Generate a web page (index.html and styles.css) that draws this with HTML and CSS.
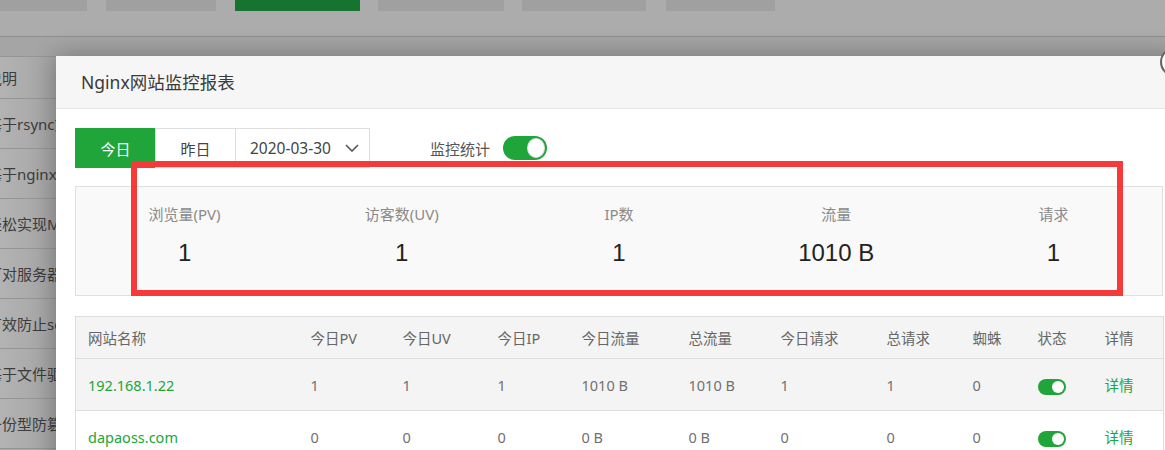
FILE: index.html
```html
<!DOCTYPE html>
<html lang="zh-CN">
<head>
<meta charset="utf-8">
<title>Nginx网站监控报表</title>
<link rel="stylesheet" href="styles.css">
</head>
<body>
<div class="page-bg">
  <div class="topbar">
    <div class="tabs">
      <span class="tab w1"></span>
      <span class="tab w2"></span>
      <span class="tab w3 green"></span>
      <span class="tab w4"></span>
      <span class="tab w5"></span>
      <span class="tab w6"></span>
    </div>
  </div>
  <div class="band"></div>
  <ul class="doc-list">
    <li class="first"><span>说明</span></li>
    <li><span>基于rsync文件同步</span></li>
    <li><span>基于nginx防火墙</span></li>
    <li><span>轻松实现MySQL</span></li>
    <li><span>可对服务器进行</span></li>
    <li><span>有效防止sql注入</span></li>
    <li><span>基于文件驱动</span></li>
    <li><span>备份型防篡改</span></li>
  </ul>
</div>

<div class="modal">
  <div class="modal-head">Nginx网站监控报表</div>
  <div class="modal-body">
    <div class="toolbar">
      <div class="btn-group">
        <span class="btn active">今日</span>
        <span class="btn">昨日</span>
        <span class="date-select">2020-03-30
          <svg class="chev" width="14" height="8" viewBox="0 0 14 8"><polyline points="1,1 7,7 13,1" fill="none" stroke="#555" stroke-width="1.6"/></svg>
        </span>
      </div>
      <div class="monitor">
        <span class="monitor-label">监控统计</span>
        <span class="switch big"><span class="knob"></span></span>
      </div>
    </div>

    <div class="stats">
      <div class="stat"><div class="stat-label">浏览量(PV)</div><div class="stat-value">1</div></div>
      <div class="stat"><div class="stat-label">访客数(UV)</div><div class="stat-value">1</div></div>
      <div class="stat"><div class="stat-label">IP数</div><div class="stat-value">1</div></div>
      <div class="stat"><div class="stat-label">流量</div><div class="stat-value">1010 B</div></div>
      <div class="stat"><div class="stat-label">请求</div><div class="stat-value">1</div></div>
    </div>

    <table class="sites">
      <colgroup>
        <col class="c1"><col class="c2"><col class="c3"><col class="c4"><col class="c5"><col class="c6"><col class="c7"><col class="c8"><col class="c9"><col class="c10"><col class="c11">
      </colgroup>
      <thead>
        <tr><th>网站名称</th><th>今日PV</th><th>今日UV</th><th>今日IP</th><th>今日流量</th><th>总流量</th><th>今日请求</th><th>总请求</th><th>蜘蛛</th><th>状态</th><th>详情</th></tr>
      </thead>
      <tbody>
        <tr class="hover">
          <td class="link">192.168.1.22</td><td>1</td><td>1</td><td>1</td><td>1010 B</td><td>1010 B</td><td>1</td><td>1</td><td>0</td>
          <td><span class="switch small"><span class="knob"></span></span></td><td class="link">详情</td>
        </tr>
        <tr>
          <td class="link">dapaoss.com</td><td>0</td><td>0</td><td>0</td><td>0 B</td><td>0 B</td><td>0</td><td>0</td><td>0</td>
          <td><span class="switch small"><span class="knob"></span></span></td><td class="link">详情</td>
        </tr>
      </tbody>
    </table>
  </div>
  <span class="close-btn"></span>
</div>

<div class="highlight"></div>
</body>
</html>
```

FILE: styles.css
```css
* { box-sizing: border-box; }
html, body {
  margin: 0;
  padding: 0;
}
body {
  width: 1165px;
  height: 450px;
  overflow: hidden;
  position: relative;
  font-family: "Noto Sans", "Noto Sans CJK SC", sans-serif;
  background: #a9a9a9;
}

/* dimmed background page */
.page-bg {
  width: 100%;
  height: 100%;
}
.topbar {
  height: 37px;
  background: #acacac;
  border-bottom: 1px solid #8f8f8f;
}
.tabs {
  display: flex;
  height: 11px;
}
.tab {
  display: block;
  height: 11px;
  background: #a0a0a0;
}
.tab.w1 { width: 87px; }
.tab.w2 { width: 110px; margin-left: 19px; }
.tab.w3 { width: 125px; margin-left: 19px; }
.tab.w4 { width: 126px; margin-left: 18px; }
.tab.w5 { width: 124px; margin-left: 18px; }
.tab.w6 { width: 109px; margin-left: 20px; }
.tab.green { background: #177430; }
.band {
  height: 19px;
  background: #a5a5a5;
}
.doc-list {
  list-style: none;
  margin: 0;
  padding: 0;
  width: 160px;
  border-top: 1px solid #959595;
}
.doc-list li {
  height: 50px;
  border-bottom: 1px solid #959595;
  overflow: hidden;
  white-space: nowrap;
  display: flex;
  align-items: center;
  background: linear-gradient(to right, #b3b3b3 0px, #a4a4a4 56px);
}
.doc-list li.first { height: 42px; }
.doc-list li span {
  margin-left: -13px;
  font-size: 15px;
  color: #3c3c3c;
}

/* modal */
.modal {
  position: absolute;
  left: 56px;
  top: 56px;
  width: 1126px;
  height: 420px;
  background: #fff;
  box-shadow: 0 0 24px rgba(0, 0, 0, 0.3);
}
.modal-head {
  height: 53px;
  line-height: 52px;
  background: #f6f6f6;
  border-bottom: 1px solid #e6e6e6;
  padding-left: 25px;
  font-size: 17.5px;
  color: #3a3a3a;
}
.modal-body {
  padding: 19px 19px 0 19px;
}
.close-btn {
  position: absolute;
  left: 1104px;
  top: -9px;
  width: 30px;
  height: 30px;
  border-radius: 50%;
  background: #fff;
  border: 2px solid #666;
}

.toolbar {
  display: flex;
  align-items: center;
  height: 40px;
}
.btn-group {
  display: flex;
  height: 40px;
}
.btn, .date-select {
  display: flex;
  align-items: center;
  height: 40px;
  border: 1px solid #dddddd;
  font-size: 15px;
  color: #444;
  background: #fff;
}
.btn {
  width: 81px;
  justify-content: center;
}
.btn + .btn, .btn + .date-select { margin-left: -1px; }
.btn.active {
  width: 81px;
  background: #20a53a;
  border-color: #20a53a;
  color: #fff;
}
.date-select {
  width: 135px;
  padding-left: 14px;
  padding-right: 10px;
  justify-content: space-between;
  font-size: 15.5px;
}
.chev { display: block; }

.monitor {
  display: flex;
  align-items: center;
  margin-left: 60px;
}
.monitor-label {
  font-size: 15px;
  color: #555;
}

.switch {
  display: inline-flex;
  align-items: center;
  justify-content: flex-end;
  background: #20a53a;
  border-radius: 999px;
}
.switch .knob {
  display: block;
  background: #fff;
  border-radius: 50%;
}
.switch.big {
  width: 44px;
  height: 24px;
  margin-left: 13px;
  padding: 2px;
}
.switch.big .knob {
  width: 18px;
  height: 20px;
  border: 1px solid #ddd;
  border-radius: 50%;
}
.switch.small {
  width: 28px;
  height: 16px;
  padding: 2px;
  vertical-align: middle;
}
.switch.small .knob {
  width: 12px;
  height: 12px;
}

/* stats */
.stats {
  margin-top: 18px;
  height: 110px;
  border: 1px solid #e0e0e0;
  background: #f9f9f9;
  display: grid;
  grid-template-columns: repeat(5, 1fr);
  padding-top: 17px;
  width: 1088px;
}
.stat {
  text-align: center;
}
.stat-label {
  font-size: 15px;
  line-height: 20px;
  color: #8a8a8a;
}
.stat-value {
  margin-top: 14px;
  font-family: "Liberation Sans", Arial, sans-serif;
  font-size: 24px;
  line-height: 30px;
  color: #222;
}

/* table */
.sites {
  margin-top: 20px;
  width: 1088px;
  table-layout: fixed;
  border-collapse: collapse;
  border: 1px solid #dddddd;
  font-size: 14.5px;
  color: #707070;
}
.sites col.c1 { width: 223px; }
.sites col.c2 { width: 92px; }
.sites col.c3 { width: 95px; }
.sites col.c4 { width: 84px; }
.sites col.c5 { width: 107px; }
.sites col.c6 { width: 92px; }
.sites col.c7 { width: 106px; }
.sites col.c8 { width: 86px; }
.sites col.c9 { width: 65px; }
.sites col.c10 { width: 67px; }
.sites col.c11 { width: 71px; }
.sites th {
  height: 42px;
  padding: 0 0 0 12px;
  text-align: left;
  font-weight: normal;
  background: #f4f4f4;
  color: #666;
  border-bottom: 1px solid #dddddd;
}
.sites td {
  height: 52px;
  padding: 0 0 0 12px;
  border-bottom: 1px solid #dddddd;
  white-space: nowrap;
}
.sites tr.hover td { background: #f4f4f4; }
.sites td.link { color: #20a53a; }

/* annotation */
.highlight {
  position: absolute;
  left: 131px;
  top: 161px;
  width: 992px;
  height: 135px;
  border: 6px solid #f63a3a;
}
```
